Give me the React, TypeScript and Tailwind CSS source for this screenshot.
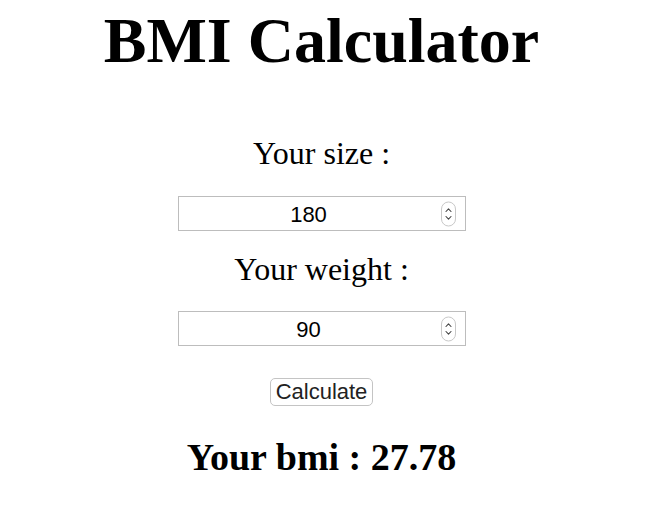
import { useState } from "react";

const serif = "font-['Liberation_Serif','Times_New_Roman',serif]";
const sans = "font-['Liberation_Sans',Arial,sans-serif]";

const Spinner = () => (
    <div className="absolute right-[9px] top-1/2 -translate-y-1/2 w-[15px] h-[25px] rounded-full border border-[#c8c8c8] bg-white flex flex-col items-center justify-center gap-[3px]">
        <svg width="7" height="5" viewBox="0 0 7 5" fill="none">
            <path d="M1 4 L3.5 1.3 L6 4" stroke="#444" strokeWidth="1.1" strokeLinecap="round" strokeLinejoin="round" />
        </svg>
        <svg width="7" height="5" viewBox="0 0 7 5" fill="none">
            <path d="M1 1 L3.5 3.7 L6 1" stroke="#444" strokeWidth="1.1" strokeLinecap="round" strokeLinejoin="round" />
        </svg>
    </div>
);

const NumberField = ({ value, onChange }: { value: string; onChange: (v: string) => void }) => (
    <div className="relative w-[288px] h-[35px] border border-[#bdbdbd] bg-white">
        <input
            type="text"
            value={value}
            onChange={(e) => onChange(e.target.value)}
            className={`w-full h-full pr-[26px] pt-[2px] text-center text-[22px] text-black outline-none bg-transparent ${sans}`}
        />
        <Spinner />
    </div>
);

export default function App() {
    const [size, setSize] = useState("180");
    const [weight, setWeight] = useState("90");
    const [bmi, setBmi] = useState("27.78");

    const calculate = () => {
        const h = parseFloat(size) / 100;
        const w = parseFloat(weight);
        if (h > 0 && w > 0) setBmi((w / (h * h)).toFixed(2));
    };

    return (
        <div className={`w-[643px] min-h-[526px] bg-white flex flex-col items-center text-black ${serif}`}>
            <h1 className="text-[64px] font-bold leading-none mt-[9px]">BMI Calculator</h1>

            <p className="text-[32px] leading-none mt-[64px]">Your size :</p>
            <div className="mt-[27px]">
                <NumberField value={size} onChange={setSize} />
            </div>

            <p className="text-[32px] leading-none mt-[22px]">Your weight :</p>
            <div className="mt-[26px]">
                <NumberField value={weight} onChange={setWeight} />
            </div>

            <button
                onClick={calculate}
                className={`mt-[32px] h-[28px] px-[5px] rounded-[5px] border border-[#c4c4c4] bg-white text-[22px] leading-none text-[#222] ${sans}`}
            >
                Calculate
            </button>

            <h2 className="text-[38px] font-bold leading-none mt-[32px]">Your bmi : {bmi}</h2>
        </div>
    );
}
